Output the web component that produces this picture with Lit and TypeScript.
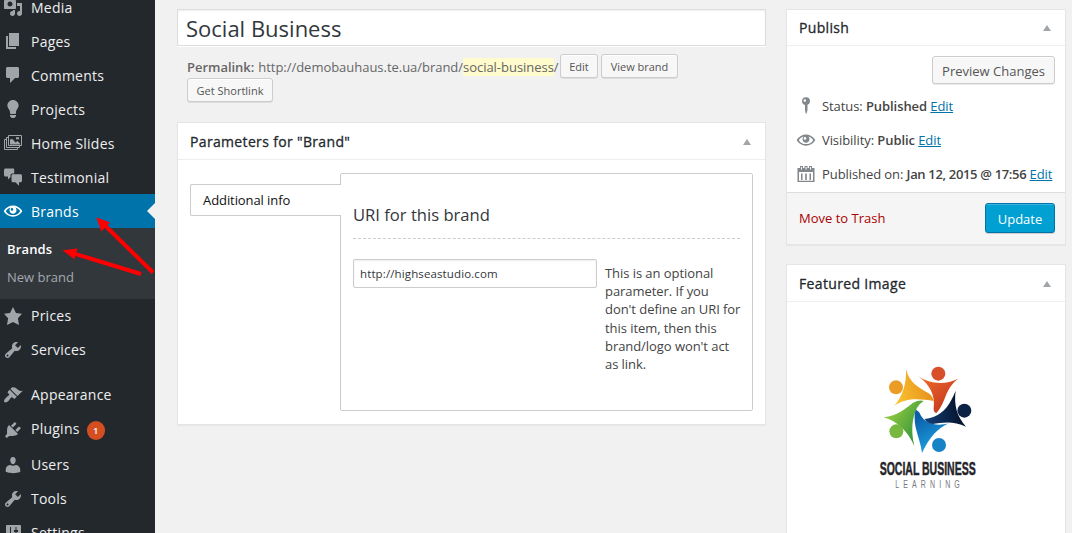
import { LitElement, html, css, svg, TemplateResult } from "lit";
import { customElement, property } from "lit/decorators.js";

const wrench =
  "M16.68 9.77c-1.34 1.34-3.3 1.67-4.95.99l-5.41 6.52c-.99.99-2.59.99-3.58 0s-.99-2.59 0-3.57l6.52-5.42c-.68-1.65-.35-3.61.99-4.95 1.28-1.28 3.12-1.62 4.72-1.06l-2.89 2.89 2.82 2.82 2.86-2.87c.53 1.58.18 3.39-1.08 4.65zM3.81 16.21c.4.39 1.04.39 1.43 0 .4-.4.4-1.04 0-1.43-.39-.4-1.03-.4-1.43 0-.39.39-.39 1.03 0 1.43z";

const eye =
  "M18.95 9.6C17.1 6.7 13.7 4.6 10 4.6S2.9 6.7 1.05 9.6L.8 10.2l.25.6c1.85 2.9 5.25 4.9 8.95 4.9s7.1-2 8.95-4.9l.25-.6zM10 14.1c-3 0-5.6-1.4-7.2-3.9C4 8.200 5.9 7 7.7 6.500c-.7.6-1.2 1.600-1.2 2.700 0 1.9 1.600 3.500 3.500 3.500s3.500-1.600 3.500-3.500c0-1.100-.5-2.100-1.200-2.700 1.800.5 3.700 1.700 4.900 3.700-1.600 2.500-4.200 3.900-7.200 3.900zM9 7.100a1.300 1.300 0 1 1 0 2.600 1.300 1.300 0 0 1 0-2.600z";

const fills: Record<string, string> = {
  media:
    "M13 11V4c0-.55-.45-1-1-1h-1.67L9 1H5L3.67 3H2c-.55 0-1 .45-1 1v7c0 .55.45 1 1 1h10c.55 0 1-.45 1-1zM7 4.5c1.38 0 2.5 1.12 2.5 2.5S8.38 9.5 7 9.5 4.5 8.38 4.5 7 5.62 4.5 7 4.5zM14 6h5v10.5c0 1.38-1.12 2.5-2.5 2.5S14 17.88 14 16.5s1.12-2.5 2.5-2.5c.17 0 .34.02.5.05V9h-3V6zm-4 8.05V13h2v3.5c0 1.38-1.12 2.5-2.5 2.5S7 17.88 7 16.5 8.12 14 9.5 14c.17 0 .34.02.5.05z",
  page: "M6 15V2h10v13H6zm-1 1h8v2H3V5h2v11z",
  comment:
    "M4.500 2h10c.8 0 1.500.7 1.500 1.500v8c0 .8-.7 1.500-1.500 1.500H12l-5 5v-5H4.500c-.8 0-1.500-.7-1.500-1.500v-8C3 2.700 3.700 2 4.500 2z",
  bulb: "M10 1c3.11 0 5.63 2.52 5.63 5.62 0 1.84-2.03 4.58-2.03 4.58-.33.44-.6 1.25-.6 1.8v1c0 .55-.45 1-1 1H8c-.55 0-1-.45-1-1v-1c0-.55-.27-1.36-.6-1.8 0 0-2.02-2.74-2.02-4.58C4.38 3.52 6.89 1 10 1zM7 16.87V16h6v.87c0 .62-.13 1.13-.75 1.13H12c0 .62-.4 1-1.02 1h-2c-.61 0-.98-.38-.98-1h-.25c-.62 0-.75-.51-.75-1.13z",
  quotes:
    "M2.500 1.500h7.500c.8 0 1.200.5 1.200 1.200V6.500H9.500C8.300 6.500 7.500 7.300 7.500 8.500v1.600L5 12.500v-3H2.500C1.700 9.500 1 8.900 1 8V3C1 2.100 1.700 1.500 2.500 1.500zM10 7.200h7.500c.8 0 1.500.7 1.500 1.500v5c0 .8-.7 1.500-1.500 1.500H16v3.500L12.500 15.200H10c-.8 0-1.500-.7-1.500-1.500v-5c0-.8.7-1.500 1.500-1.500z",
  eye,
  star: "M10 1l3 6 6 .75-4.12 4.62L16 19l-6-3-6 3 1.13-6.63L1 7.75 7 7z",
  wrench,
  brush:
    "M14.48 11.06L7.41 3.99l1.5-1.5c.5-.56 2.3-.47 3.51.32 1.21.8 1.43 1.28 2.91 2.1 1.18.64 2.45 1.26 4.45.85zm-.71.71L6.7 4.7 4.93 6.47c-.39.39-.39 1.02 0 1.41l1.06 1.06c.39.39.39 1.03 0 1.42-.6.6-1.43 1.11-2.21 1.69-.35.26-.7.53-1.01.84C1.43 14.23.4 16.08 1.4 17.07c.99 1 2.84-.03 4.18-1.36.31-.31.58-.66.85-1.02.57-.78 1.08-1.61 1.69-2.21.39-.39 1.02-.39 1.41 0l1.06 1.06c.39.39 1.02.39 1.41 0z",
  plug: "M13.11 4.36L9.87 7.6 8 5.73l3.24-3.24c.35-.34 1.05-.2 1.56.32.52.51.66 1.21.31 1.55zm-8 1.77l.91-1.12 9.01 9.01-1.19.84c-.71.71-2.63 1.16-3.82 1.16H6.14L4.9 17.26c-.59.59-1.54.59-2.12 0-.59-.58-.59-1.53 0-2.12l1.24-1.24v-3.88c0-1.13.4-3.19 1.09-3.89zm7.26 3.97l3.24-3.24c.34-.35 1.04-.21 1.55.31.52.51.66 1.21.31 1.55l-3.24 3.25z",
  user: "M10 9.25c-2.27 0-2.73-3.44-2.73-3.44C7 4.02 7.82 2 9.97 2c2.16 0 2.98 2.02 2.71 3.81 0 0-.41 3.44-2.68 3.44zM7.280 10c1.800 1 3.600 1 5.440 0 2.390 0 4.520 2.330 4.520 4.530v2.490s-3.65 1.13-7.24 1.13c-3.65 0-7.24-1.13-7.24-1.13v-2.490C2.760 12.280 4.700 10 7.280 10z",
  sliders:
    "M18 17V3c0-.55-.45-1-1-1H4c-.55 0-1 .45-1 1v14c0 .55.45 1 1 1h13c.55 0 1-.45 1-1zM8 10.500h1.500v2H8V15H7v-2.500H5.500v-2H7V4h1zm5.500-1.500V15h-1V9H11V7h1.500V4h1v3H15v2z",
  pin: "M10 1.200a4 4 0 0 1 4 4c0 1.700-1 3-2.500 3.600v5.200L10.600 17.500h-.9L9 14V8.900A4 4 0 0 1 6 5.200a4 4 0 0 1 4-4zM8.800 3.200a1.300 1.300 0 1 0 0 2.600 1.300 1.300 0 0 0 0-2.600z",
  calendar:
    "M1.500 4H4V2h3v2h1.500V2h3v2H13V2h3v2h2.500v14h-17zM3 8v8.700h14V8zM5 3v2.500h1V3zM9.500 3v2.500h1V3zM14 3v2.500h1V3zM5 9.500h1.500V16H5zM9.200 9.500h1.600V16H9.200zM13.500 9.500H15V16h-1.500z",
};

@customElement("wp-icon")
class WpIcon extends LitElement {
  @property() name = "";
  static styles = css`
    :host { display: block; width: 20px; height: 20px; flex: none; }
    svg { display: block; }
  `;
  render() {
    const body =
      this.name === "slides"
        ? svg`<g fill="none" stroke="currentColor" stroke-width="1">
            <path d="M5.500 2.500h13v10h-13z"/><path d="M5 4.500H3.500v10h13V13"/>
            <path d="M3 6.500H1.500v10h13V15"/></g>
            <path fill="currentColor" d="M7 11.500V6.500l2.500-.5 3 3.500 2-1.500 2.500 2.500v1zM13 4.300h3v2H13z"/>`
        : svg`<path fill="currentColor" fill-rule="evenodd" d=${fills[this.name] ?? ""}/>`;
    return html`<svg width="20" height="20" viewBox="0 0 20 20">${body}</svg>`;
  }
}

interface Entry { icon: string; label: string; cls?: string; badge?: string; }

@customElement("admin-menu")
class AdminMenu extends LitElement {
  static styles = css`
    :host { display: block; background: #23282d; color: #eee; font-size: 14px; line-height: 34px; overflow: hidden; }
    .list { display: flex; flex-direction: column; margin-top: -10px; }
    .item { display: flex; align-items: center; height: 34px; padding-left: 3px; gap: 8px; white-space: nowrap; letter-spacing: 0.24px; }
    .item wp-icon { color: #a0a5aa; }
    .upper .text { padding-top: 2px; }
    .active { background: #0073aa; color: #fff; justify-content: flex-start; }
    .active wp-icon { color: #fff; }
    .notch { margin-left: auto; border: 8px solid transparent; border-right-color: #f1f1f1; border-left: 0; width: 0; height: 0; }
    .apart { margin-top: 11px; }
    .tall { height: 36px; }
    .tall .text { padding-bottom: 2px; }
    .badge { background: #d54e21; color: #fff; border-radius: 10px; width: 18px; height: 19px; font-size: 9.500px; line-height: 19px; font-weight: 600; text-align: center; letter-spacing: 0; margin: 1px 0 0 -1px; }
    .sub { background: #32373c; height: 71px; padding: 8px 0 0 7px; box-sizing: border-box; font-size: 13px; line-height: 28px; color: #a4a9ae; }
    .current { color: #fff; font-weight: 600; line-height: 27px; letter-spacing: 0.15px; }
  `;
  item(e: Entry, group = ""): TemplateResult {
    return html`<div class="item ${group} ${e.cls ?? ""}">
      <wp-icon name=${e.icon}></wp-icon><span class="text">${e.label}</span>
      ${e.badge ? html`<span class="badge">${e.badge}</span>` : ""}
      ${e.cls === "active" ? html`<span class="notch"></span>` : ""}
    </div>`;
  }
  render() {
    const top: Entry[] = [
      { icon: "media", label: "Media" },
      { icon: "page", label: "Pages" },
      { icon: "comment", label: "Comments" },
      { icon: "bulb", label: "Projects" },
      { icon: "slides", label: "Home Slides" },
      { icon: "quotes", label: "Testimonial" },
      { icon: "eye", label: "Brands", cls: "active" },
    ];
    const rest: Entry[] = [
      { icon: "star", label: "Prices" },
      { icon: "wrench", label: "Services" },
      { icon: "brush", label: "Appearance", cls: "apart" },
      { icon: "plug", label: "Plugins", cls: "tall", badge: "1" },
      { icon: "user", label: "Users" },
      { icon: "wrench", label: "Tools" },
      { icon: "sliders", label: "Settings" },
    ];
    return html`<nav class="list">
      ${top.map((e) => this.item(e, "upper"))}
      <div class="sub"><div class="current">Brands</div><div>New brand</div></div>
      ${rest.map((e) => this.item(e))}
    </nav>`;
  }
}

@customElement("post-box")
class PostBox extends LitElement {
  @property() heading = "";
  static styles = css`
    :host { display: block; box-sizing: border-box; background: #fff; border: 1px solid #e5e5e5; box-shadow: 0 1px 1px rgba(0, 0, 0, 0.04); }
    .head { display: flex; align-items: center; justify-content: space-between; height: var(--head, 36px); padding: 0 14px 0 12px; border-bottom: 1px solid #eee; font-size: 14px; letter-spacing: 0.34px; -webkit-text-stroke: 0.3px #23282d; color: #23282d; white-space: nowrap; }
    .label { padding-top: var(--drop, 2px); }
    .toggle { width: 0; height: 0; margin-top: 1px; border: 4px solid transparent; border-top: 0; border-bottom: 6px solid #a0a5aa; }
  `;
  render() {
    return html`<div class="head"><span class="label">${this.heading}</span><span class="toggle"></span></div><slot></slot>`;
  }
}

@customElement("brand-logo")
class BrandLogo extends LitElement {
  static styles = css`
    :host { display: block; }
    svg { display: block; overflow: visible; }
    .name { font: 700 56px "Liberation Sans Narrow", "Liberation Sans", sans-serif; fill: #25252a; stroke: #25252a; stroke-width: 1.5px; }
    .tag { font: 400 34px "Liberation Sans Narrow", "Liberation Sans", sans-serif; fill: #77777c; }
  `;
  render() {
    const grad = (id: string, a: string, b: string, v: string) => {
      const [x1, y1, x2, y2] = v.split(" ");
      return svg`<linearGradient id=${id} gradientUnits="userSpaceOnUse" x1=${x1} y1=${y1} x2=${x2} y2=${y2}>
        <stop offset="0" stop-color=${a}/><stop offset="1" stop-color=${b}/></linearGradient>`;
    };
    return html`<svg width="120" height="140" viewBox="0 0 360 420">
      <defs>
        ${grad("r", "#ef6a2b", "#c3371f", "150 70 230 170")}
        ${grad("y", "#f8c22e", "#e8921d", "80 130 180 100")}
        ${grad("g", "#8cc63f", "#3d9a3c", "60 180 140 230")}
        ${grad("b", "#0a5fa8", "#1e9fe0", "150 180 200 280")}
        ${grad("n", "#123a6e", "#06142e", "180 190 270 170")}
      </defs>
      <circle cx="205" cy="56" r="21" fill="#d8502a"/>
      <path fill="url(#r)" d="M145 64C180 88 228 90 264 71C236 92 228 122 218 145Q208 166 199 174Q190 173 191 160C196 120 180 90 145 64z"/>
      <circle cx="78" cy="97" r="21" fill="#eb9c25"/>
      <path fill="url(#y)" d="M108 43C117 82 147 99 176 115Q190 126 191 138Q180 135 164 134C130 130 101 133 73 152C98 124 110 86 108 43z"/>
      <circle cx="79" cy="229" r="21" fill="#79b840"/>
      <path fill="url(#g)" d="M41 187C82 183 110 158 128 144Q147 134 161 138Q148 146 141 158C126 188 122 228 133 273C114 229 82 199 41 187z"/>
      <circle cx="207" cy="270" r="21" fill="#1583c6"/>
      <path fill="url(#b)" d="M137 164Q149 169 152 181C166 205 198 216 236 205C201 222 178 247 156 294C151 252 133 223 134 190Q133 174 137 164z"/>
      <circle cx="283" cy="167" r="21" fill="#0d2345"/>
      <path fill="url(#n)" d="M257 107C251 151 261 184 288 215C251 196 214 203 188 207Q172 205 164 192Q177 190 192 185C223 172 241 147 257 107z"/>
      <text class="name" x="29" y="361" textLength="288" lengthAdjust="spacingAndGlyphs">SOCIAL BUSINESS</text>
      <g transform="translate(76 400) scale(.62 1)"><text class="tag" x="0" y="0" textLength="312">LEARNING</text></g>
    </svg>`;
  }
}

@customElement("app-root")
class AppRoot extends LitElement {
  static styles = css`
    :host { display: grid; grid-template-columns: 177px 609px 280px; position: relative; box-sizing: border-box; width: 1072px; height: 533px; overflow: hidden; background: #f1f1f1; color: #444; font: 13px/18px "Open Sans", sans-serif; }
    admin-menu { width: 155px; }
    .main { width: 589px; padding-top: 9px; }
    .title { box-sizing: border-box; height: 37px; padding-left: 8px; background: #fff; border: 1px solid #ddd; box-shadow: inset 0 1px 2px rgba(0, 0, 0, 0.07), 0 1px 0 #fff; font-size: 22px; line-height: 37px; color: #32373c; }
    .permalink { display: flex; flex-wrap: wrap; align-items: center; height: 48px; margin: 8px 0 20px; padding: 0 80px 0 10px; align-content: flex-start; color: #666; line-height: 24px; white-space: nowrap; }
    .permalink b { font-weight: 600; margin-right: 4px; }
    .slug { background: #fffbcc; }
    .link { width: 370px; height: 24px; line-height: 26px; letter-spacing: -0.03px; }
    .btn { box-sizing: border-box; display: flex; align-items: center; justify-content: center; background: #f7f7f7; border: 1px solid #ccc; border-radius: 3px; box-shadow: inset 0 1px 0 #fff, 0 1px 0 rgba(0, 0, 0, 0.08); color: #555; white-space: nowrap; }
    .small { height: 24px; padding-top: 1px; font-size: 11px; }
    .edit { width: 38px; margin: 0 3px; }
    .view { width: 77px; }
    .short { width: 86px; }
    .params { height: 303px; }
    .body { display: flex; padding: 13px 12px; }
    .tab { box-sizing: border-box; width: 151px; height: 32px; margin: 11px -1px 0 0; padding-left: 12px; border: 1px solid #ccc; border-right: 0; border-radius: 2px 0 0 2px; background: #fff; color: #111; line-height: 31px; letter-spacing: -0.08px; z-index: 1; }
    .panel { box-sizing: border-box; width: 413px; height: 238px; padding: 28px 12px 0; border: 1px solid #ccc; border-radius: 2px; }
    .sub { height: 36px; border-bottom: 1px dashed #ccc; font-size: 16.600px; line-height: 25px; color: #32373c; }
    .field { display: flex; gap: 8px; margin-top: 20px; }
    .input { box-sizing: border-box; flex: none; width: 244px; height: 29px; padding-left: 6px; border: 1px solid #ccc; border-radius: 2px; box-shadow: inset 0 1px 2px rgba(0, 0, 0, 0.07); font-size: 11.500px; letter-spacing: 0.12px; line-height: 28px; color: #32373c; }
    .help { flex: none; width: 137px; padding-top: 5px; line-height: 18.200px; letter-spacing: -0.06px; color: #444; }
    .side { display: flex; flex-direction: column; gap: 19px; padding-top: 9px; }
    .publish { height: 236px; --head: 35px; --drop: 0px; }
    .featured { height: 300px; }
    .preview { width: 123px; height: 28px; margin: 10px 10px 5px auto; padding-top: 2px; }
    .row { display: flex; align-items: center; height: 34px; padding-left: 9px; gap: 6px; white-space: nowrap; letter-spacing: -0.08px; }
    .row wp-icon { color: #82878c; }
    .row b { font-weight: 600; }
    .row .date { letter-spacing: -0.33px; }
    .row u { color: #0073aa; }
    .actions { display: flex; align-items: center; justify-content: space-between; height: 51px; padding: 0 10px 0 12px; background: #f5f5f5; border-top: 1px solid #ddd; }
    .trash { color: #a00; padding-bottom: 1px; }
    .update { box-sizing: border-box; width: 70px; height: 30px; margin-top: -1px; background: #00a0d2; border: 1px solid #0073aa; border-radius: 3px; box-shadow: inset 0 1px 0 rgba(120, 200, 230, 0.5), 0 1px 0 rgba(0, 0, 0, 0.15); color: #fff; line-height: 30px; text-align: center; }
    .rows { height: 103px; }
    brand-logo { margin: 53px 0 0 83px; }
    .arrows { position: absolute; left: 0; top: 0; }
  `;
  render() {
    return html`
      <admin-menu></admin-menu>
      <main class="main">
        <div class="title">Social Business</div>
        <div class="permalink">
          <div class="link"><b>Permalink:</b>http://demobauhaus.te.ua/brand/<span class="slug">social-business</span>/</div>
          <div class="btn small edit">Edit</div>
          <div class="btn small view">View brand</div>
          <div class="btn small short">Get Shortlink</div>
        </div>
        <post-box class="params" heading='Parameters for "Brand"'>
          <div class="body">
            <div class="tab">Additional info</div>
            <div class="panel">
              <div class="sub">URI for this brand</div>
              <div class="field">
                <div class="input">http://highseastudio.com</div>
                <div class="help">This is an optional parameter. If you don't define an URI for this item, then this brand/logo won't act as link.</div>
              </div>
            </div>
          </div>
        </post-box>
      </main>
      <aside class="side">
        <post-box class="publish" heading="Publish">
          <div class="btn preview">Preview Changes</div>
          <div class="rows">
            <div class="row"><wp-icon name="pin"></wp-icon><span>Status: <b>Published</b> <u>Edit</u></span></div>
            <div class="row"><wp-icon name="eye"></wp-icon><span>Visibility: <b>Public</b> <u>Edit</u></span></div>
            <div class="row"><wp-icon name="calendar"></wp-icon><span>Published on: <b class="date">Jan 12, 2015 @ 17:56</b> <u>Edit</u></span></div>
          </div>
          <div class="actions"><span class="trash">Move to Trash</span><span class="update">Update</span></div>
        </post-box>
        <post-box class="featured" heading="Featured Image"><brand-logo></brand-logo></post-box>
      </aside>
      <svg class="arrows" width="160" height="290" viewBox="0 0 160 290">
        <g stroke="#f00" stroke-width="4"><path d="M105 225.500L153 272.500M75 253.800L141 274"/></g>
        <g fill="#f00"><path d="M96.300 217.300L110 222.500 101.300 231.500zM62.500 250.300L77.500 248.500 74.300 259.200z"/></g>
      </svg>
    `;
  }
}
